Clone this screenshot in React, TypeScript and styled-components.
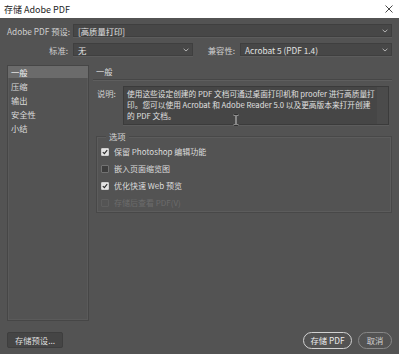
import React from 'react';
import styled, { createGlobalStyle, css } from 'styled-components';

const GlobalStyle = createGlobalStyle`
  html, body {
    margin: 0;
    padding: 0;
    background: #535353;
  }
  body {
    font-family: "Noto Sans CJK SC", "Noto Sans", sans-serif;
    font-size: 8.3px;
    color: #d8d8d8;
  }
`;

const Window = styled.div`
  width: 399px;
  height: 354px;
  display: flex;
  flex-direction: column;
  background: #535353;
  overflow: hidden;
`;

const TitleBar = styled.div`
  height: 18px;
  flex: 0 0 18px;
  background: #ffffff;
  display: flex;
  align-items: center;
  justify-content: space-between;
  padding: 0 5px 0 4px;
  color: #1e1e1e;
  font-size: 9px;
`;

const CloseButton = styled.button`
  width: 10px;
  height: 10px;
  padding: 0;
  border: none;
  background: transparent;
  display: flex;
  align-items: center;
  justify-content: center;
`;

const Body = styled.div`
  flex: 1;
  display: flex;
  flex-direction: column;
  padding: 6px 7px 6px 7px;
`;

const FieldRow = styled.div<{ mt?: number }>`
  display: flex;
  align-items: center;
  height: 13px;
  margin-top: ${({ mt }) => mt ?? 0}px;
`;

const FieldLabel = styled.span<{ width?: number }>`
  width: ${({ width }) => width ?? 61}px;
  flex: 0 0 auto;
  text-align: right;
  padding-right: 5px;
  color: #cfcfcf;
  white-space: nowrap;
`;

const Select = styled.div<{ width?: number }>`
  ${({ width }) =>
    width
      ? css`
          width: ${width}px;
          flex: 0 0 auto;
        `
      : css`
          flex: 1;
        `}
  height: 13px;
  box-sizing: border-box;
  background: #474747;
  border: 1px solid #3f3f3f;
  box-shadow: 0 1px 0 #5c5c5c;
  display: flex;
  align-items: center;
  justify-content: space-between;
  padding: 0 3px 0 4px;
  color: #e2e2e2;
  white-space: nowrap;
`;

const Main = styled.div`
  display: flex;
  gap: 4px;
  height: 256px;
  margin-top: 9px;
`;

const SideList = styled.div`
  width: 82px;
  box-sizing: border-box;
  border: 1px solid #464646;
  box-shadow: inset 0 0 0 1px #5a5a5a;
  display: flex;
  flex-direction: column;
  gap: 2px;
`;

const SideItem = styled.div<{ active?: boolean }>`
  height: 12px;
  line-height: 12px;
  padding-left: 3px;
  color: #dadada;
  ${({ active }) =>
    active &&
    css`
      background: #6b6b6b;
      color: #f0f0f0;
    `}
`;

const Content = styled.div`
  flex: 1;
  display: flex;
  flex-direction: column;
`;

const SectionHeader = styled.div`
  height: 14px;
  line-height: 12px;
  padding-left: 3px;
  border-bottom: 1px solid #464646;
  box-shadow: 0 1px 0 #5e5e5e;
  color: #dadada;
`;

const DescRow = styled.div`
  display: flex;
  margin-top: 6px;
`;

const DescLabel = styled.span`
  width: 30px;
  padding-left: 4px;
  box-sizing: border-box;
  padding-top: 1px;
  color: #cfcfcf;
`;

const DescBox = styled.div`
  position: relative;
  width: 266px;
  height: 39px;
  box-sizing: border-box;
  background: #464646;
  border: 1px solid #3b3b3b;
  box-shadow: 0 1px 0 #5c5c5c;
  display: flex;
`;

const DescText = styled.div`
  flex: 1;
  padding: 1px 0 0 3px;
  font-size: 7.7px;
  line-height: 11px;
  color: #e0e0e0;
  white-space: nowrap;
`;

const ScrollTrack = styled.div`
  width: 11px;
  background: #4b4b4b;
`;

const Cursor = styled.svg`
  position: absolute;
  left: 109px;
  top: 27px;
`;

const Group = styled.div`
  position: relative;
  margin: 11px 0 0 3px;
  height: 77px;
  box-sizing: border-box;
  border: 1px solid #484848;
  box-shadow: inset 0 0 0 1px #5c5c5c;
  padding: 6px 0 0 4px;
`;

const Legend = styled.span`
  position: absolute;
  left: 9px;
  top: -7px;
  padding: 0 3px;
  background: #535353;
  color: #d6d6d6;
`;

const CheckRow = styled.label<{ disabled?: boolean }>`
  display: flex;
  align-items: center;
  gap: 5px;
  height: 17px;
  font-size: 8px;
  color: ${({ disabled }) => (disabled ? '#6c6c6c' : '#dcdcdc')};
`;

const Box = styled.span<{ checked?: boolean; disabled?: boolean }>`
  width: 8px;
  height: 8px;
  box-sizing: border-box;
  border-radius: 1px;
  display: flex;
  align-items: center;
  justify-content: center;
  ${({ checked, disabled }) =>
    checked
      ? css`
          background: #e4e4e4;
          border: 1px solid #cfcfcf;
        `
      : disabled
      ? css`
          background: #545454;
          border: 1px solid #5e5e5e;
        `
      : css`
          background: #3d3d3d;
          border: 1px solid #727272;
        `}
`;

const Footer = styled.div`
  display: flex;
  align-items: center;
  height: 16px;
  margin-top: 11px;
  gap: 6px;
`;

const PresetButton = styled.button`
  height: 16px;
  width: 56px;
  padding: 0;
  background: #454545;
  border: 1px solid #3e3e3e;
  border-radius: 2px;
  color: #dedede;
  font: inherit;
  margin-right: auto;
`;

const PillButton = styled.button<{ primary?: boolean; width: number }>`
  height: 17px;
  width: ${({ width }) => width}px;
  padding: 0;
  background: transparent;
  border-radius: 9px;
  font: inherit;
  border: 1.5px solid ${({ primary }) => (primary ? '#d2d2d2' : '#888888')};
  color: ${({ primary }) => (primary ? '#ececec' : '#d0d0d0')};
`;

const Chevron = () => (
  <svg width="6" height="4" viewBox="0 0 6 4">
    <path d="M0.6 0.8 L3 3 L5.4 0.8" fill="none" stroke="#bdbdbd" strokeWidth="0.9" />
  </svg>
);

const Check = () => (
  <svg width="6" height="6" viewBox="0 0 6 6">
    <path d="M0.8 3.1 L2.4 4.6 L5.2 1.2" fill="none" stroke="#2e2e2e" strokeWidth="1.2" />
  </svg>
);

const options = [
  { label: '保留 Photoshop 编辑功能', checked: true },
  { label: '嵌入页面缩览图', checked: false },
  { label: '优化快速 Web 预览', checked: true },
  { label: '存储后查看 PDF(V)', checked: false, disabled: true },
];

const sections = ['一般', '压缩', '输出', '安全性', '小结'];

export default function App() {
  return (
    <>
      <GlobalStyle />
      <Window>
        <TitleBar>
          <span>存储 Adobe PDF</span>
          <CloseButton>
            <svg width="8" height="8" viewBox="0 0 8 8">
              <path d="M0.5 0.5 L7.5 7.5 M7.5 0.5 L0.5 7.5" stroke="#333" strokeWidth="0.9" />
            </svg>
          </CloseButton>
        </TitleBar>
        <Body>
          <FieldRow>
            <FieldLabel>Adobe PDF 预设:</FieldLabel>
            <Select>
              <span>[高质量打印]</span>
              <Chevron />
            </Select>
          </FieldRow>
          <FieldRow mt={6}>
            <FieldLabel>标准:</FieldLabel>
            <Select width={120}>
              <span>无</span>
              <Chevron />
            </Select>
            <FieldLabel width={42}>兼容性:</FieldLabel>
            <Select>
              <span>Acrobat 5 (PDF 1.4)</span>
              <Chevron />
            </Select>
          </FieldRow>
          <Main>
            <SideList>
              {sections.map((s, i) => (
                <SideItem key={s} active={i === 0}>
                  {s}
                </SideItem>
              ))}
            </SideList>
            <Content>
              <SectionHeader>一般</SectionHeader>
              <DescRow>
                <DescLabel>说明:</DescLabel>
                <DescBox>
                  <DescText>
                    <div>使用这些设定创建的 PDF 文档可通过桌面打印机和 proofer 进行高质量打</div>
                    <div>印。您可以使用 Acrobat 和 Adobe Reader 5.0 以及更高版本来打开创建</div>
                    <div>的 PDF 文档。</div>
                  </DescText>
                  <ScrollTrack />
                  <Cursor width="6" height="12" viewBox="0 0 6 12">
                    <path
                      d="M0.5 0.5 H5.5 M3 0.5 V11.5 M0.5 11.5 H5.5"
                      stroke="#dcdcdc"
                      strokeWidth="2"
                      fill="none"
                    />
                    <path
                      d="M0.5 0.5 H5.5 M3 0.5 V11.5 M0.5 11.5 H5.5"
                      stroke="#222"
                      strokeWidth="0.9"
                      fill="none"
                    />
                  </Cursor>
                </DescBox>
              </DescRow>
              <Group>
                <Legend>选项</Legend>
                {options.map((o) => (
                  <CheckRow key={o.label} disabled={o.disabled}>
                    <Box checked={o.checked} disabled={o.disabled}>
                      {o.checked && <Check />}
                    </Box>
                    <span>{o.label}</span>
                  </CheckRow>
                ))}
              </Group>
            </Content>
          </Main>
          <Footer>
            <PresetButton>存储预设...</PresetButton>
            <PillButton primary width={49}>
              存储 PDF
            </PillButton>
            <PillButton width={34}>取消</PillButton>
          </Footer>
        </Body>
      </Window>
    </>
  );
}
